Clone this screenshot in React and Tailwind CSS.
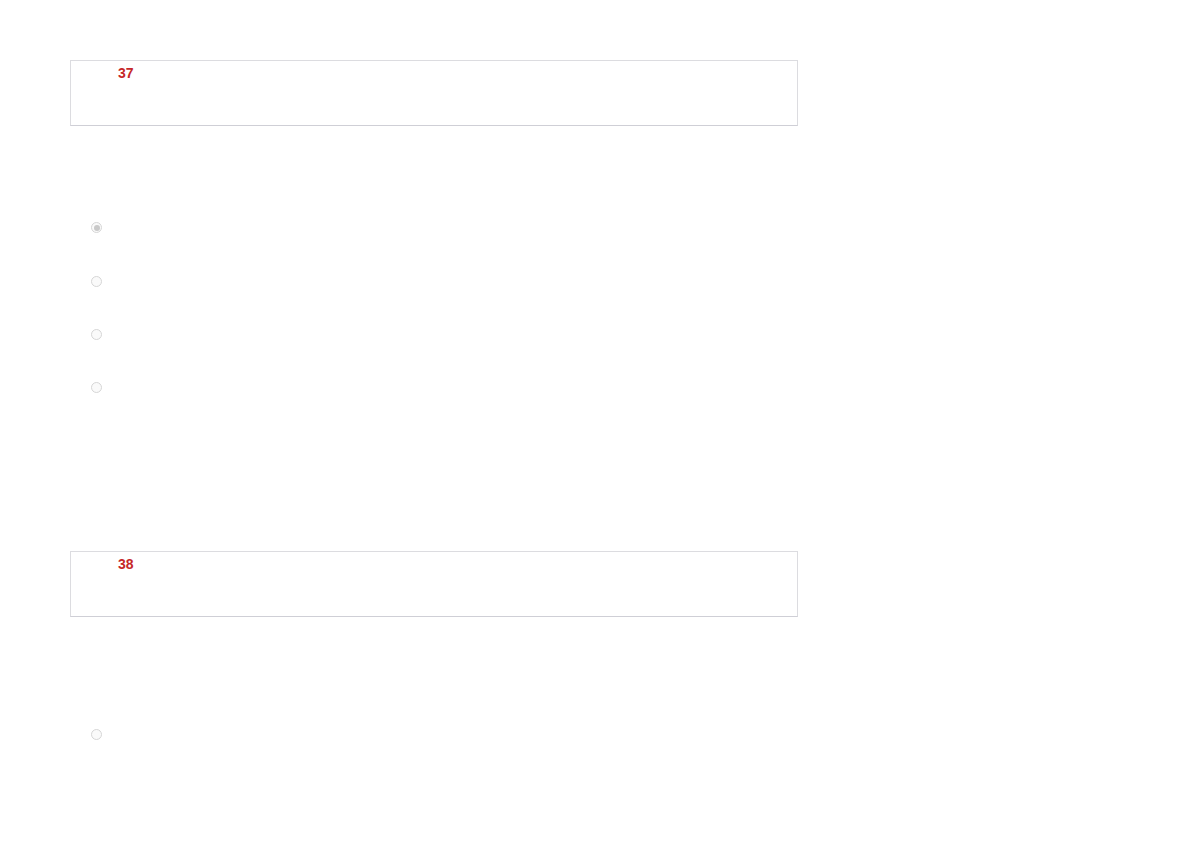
export default function App() {
  const Radio = ({ checked, h = "h-[53px]" }) => (
    <div className={`${h} flex items-start pl-[21px]`}>
      <div className="w-[11px] h-[11px] rounded-full border border-[#d6d6d6] bg-[#fafafa] flex items-center justify-center">
        {checked && <div className="w-[6px] h-[6px] rounded-full bg-[#c9c9c9]" />}
      </div>
    </div>
  );

  const Question = ({ num }) => (
    <div className="w-[728px] h-[66px] border border-[#dcdce0] border-b-[#cfcfd6] bg-white pl-[47px] pt-0">
      <span className="text-[14px] leading-[20px] font-bold text-[#c62828]" style={{ fontFamily: '"Liberation Sans", Arial, sans-serif' }}>
        {num}
      </span>
    </div>
  );

  return (
    <div className="min-h-[841px] bg-white pl-[70px] pt-[60px]" style={{ fontFamily: '"Liberation Sans", Arial, sans-serif' }}>
      {/* Question 37 */}
      <Question num="37" />
      <div className="mt-[96px]">
        <Radio checked h="h-[54px]" />
        <Radio />
        <Radio />
        <Radio />
      </div>

      {/* Question 38 */}
      <div className="mt-[116px]">
        <Question num="38" />
      </div>
      <div className="mt-[112px]">
        <Radio />
      </div>
    </div>
  );
}
